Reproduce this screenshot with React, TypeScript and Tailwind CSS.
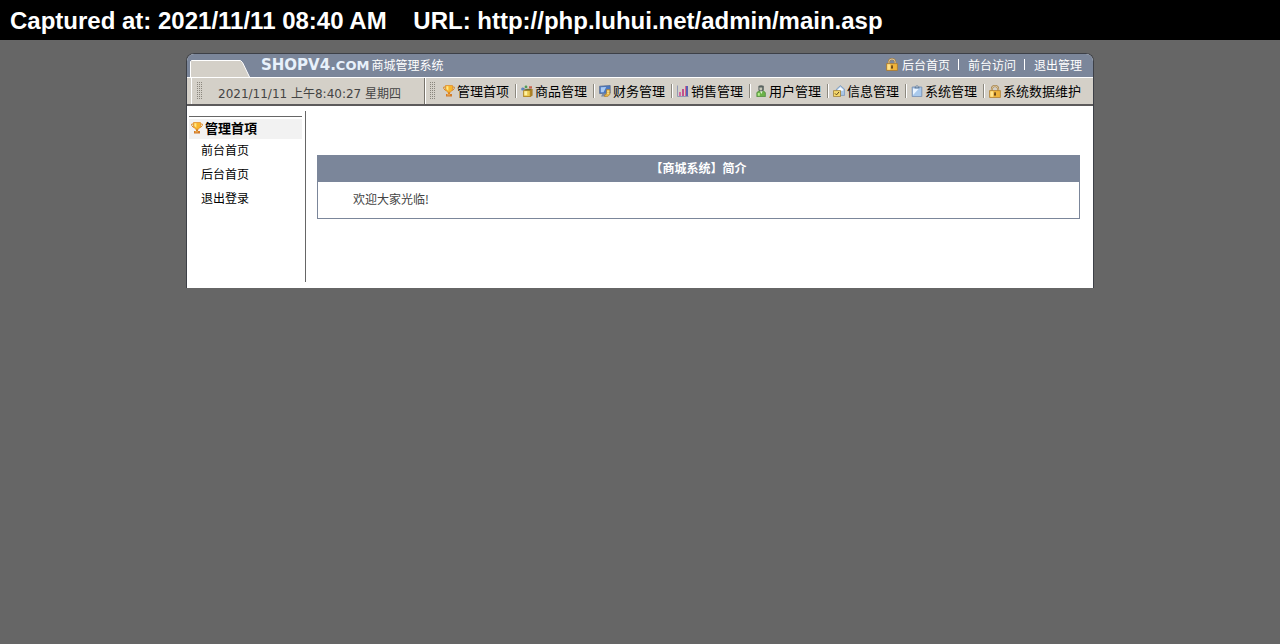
import type { ReactNode } from 'react';

const TrophyIcon = () => (
    <svg width="12" height="12" viewBox="0 0 12 12" className="shrink-0">
        <path d="M2.5 2H.7v1.4L2 5.2h1.4M9.5 2h1.8v1.4L10 5.2H8.6" fill="none" stroke="#d98a2b" />
        <path d="M2.5.5h7v3.9L7.4 7.3H4.6L2.5 4.4z" fill="#f9b62c" stroke="#e08a24" strokeWidth=".7" />
        <path d="M3.4 1.2h2v4.6L3.4 4z" fill="#ffe88a" />
        <path d="M5 7.2h2v2H5z" fill="#d98324" />
        <path d="M3 9h6v2.6H3z" fill="#d27b2a" />
        <path d="M4 9.4h3v.9H4z" fill="#fbc96a" />
    </svg>
);

const GoodsIcon = () => (
    <svg width="12" height="12" viewBox="0 0 12 12" className="shrink-0">
        <path d="M2.4 5.2L4.6 4h7v6.4L9.4 12h-7z" fill="#a9802a" />
        <path d="M2.6 5.4h6.6v6.2H2.6z" fill="#e9c84f" stroke="#a8781c" strokeWidth=".6" />
        <path d="M3.4 6.2h2.8v4H3.4z" fill="#fdf0a0" />
        <path d="M4 5.2L6 3.8h4.6L9 5.2z" fill="#6b6f32" />
        <circle cx="1.6" cy="4" r="1.5" fill="#5c86c4" />
        <circle cx="5" cy="1.9" r="1.4" fill="#4f9c58" />
        <path d="M8 3.6V1.2h3v2.4z" fill="#c8604c" />
        <path d="M2.4 2.8l2.2 2.4" stroke="#4a5f8a" strokeWidth=".8" />
    </svg>
);

const FinanceIcon = () => (
    <svg width="12" height="12" viewBox="0 0 12 12" className="shrink-0">
        <path d="M.6 1.2L11.2.5v7.7L.6 8.6z" fill="#4c78c0" stroke="#52658b" strokeWidth=".7" />
        <path d="M1.8 2.2l5.4-.3-2.6 5.4H1.8z" fill="#a8c9f3" />
        <path d="M3.4 8.8h3.4v2.8H2z" fill="#7d8ca5" />
        <path d="M7.6 4.6h3.2v5L8.4 11.6H5.6V10l2-1z" fill="#e9b543" stroke="#a87522" strokeWidth=".6" />
        <path d="M8 6.2h2.4M7.8 8.2h2.4" stroke="#fff0a6" strokeWidth=".9" />
    </svg>
);

const ChartIcon = () => (
    <svg width="12" height="12" viewBox="0 0 12 12" className="shrink-0">
        <path d="M.5.5v11H11.5" fill="none" stroke="#9299b4" />
        <path d="M2 7h2v4H2z" fill="#d668a1" />
        <path d="M5 4h2v7H5z" fill="#c0508e" />
        <path d="M8 1h3v10H8z" fill="#5960b5" />
        <path d="M8 1h1v10H8z" fill="#e06487" />
    </svg>
);

const UserIcon = () => (
    <svg width="12" height="12" viewBox="0 0 12 12" className="shrink-0">
        <path d="M1.8 11.7V7.6L4 5.8h4.4l2 1.8v4.1z" fill="#6cb24a" stroke="#3f7a31" strokeWidth=".6" />
        <path d="M5 6h2.6L6.4 9z" fill="#e5f5da" />
        <path d="M3.4.9Q6 -.6 8.8.9V5L7.4 6.2H4.8L3.4 5z" fill="#596360" />
        <path d="M4.4 2.6h2.8v2L6 5.8 4.4 4.6z" fill="#c8c9b9" />
        <path d="M2.8 8h2v2.8h-2z" fill="#b4ec8c" />
    </svg>
);

const InfoIcon = () => (
    <svg width="12" height="12" viewBox="0 0 12 12" className="shrink-0">
        <path d="M3.4 4.2L7.4.6l4.2 3.6v6.2H3.4z" fill="#a9c6e6" stroke="#718fb5" strokeWidth=".7" />
        <path d="M4.8 4.4l2.6-2.4 2.8 2.4v1.4H4.8z" fill="#f5faff" />
        <path d="M.5 5.6h7v5.9h-7z" fill="#f5d76b" stroke="#97752c" strokeWidth=".7" />
        <path d="M2 8.4l1.5 1.5L6 7" fill="none" stroke="#59431a" />
    </svg>
);

const ClipboardIcon = () => (
    <svg width="12" height="12" viewBox="0 0 12 12" className="shrink-0">
        <path d="M1.2 2h9.6v9.6H1.2z" fill="#a9c9ec" stroke="#7089ae" strokeWidth=".8" />
        <path d="M2 3.6h6L2 10z" fill="#eaf4ff" />
        <path d="M3.6 1.8h1L5 .4h2l.4 1.4h1v1.8H3.6z" fill="#66809f" />
        <path d="M5 1.4h2v.9H5z" fill="#d6dde5" />
    </svg>
);

const LockIcon = () => (
    <svg width="12" height="13" viewBox="0 0 12 13" className="shrink-0">
        <path d="M2.9 6V3.8a3.1 2.8 0 0 1 6.2 0V6" fill="none" stroke="#a07c44" strokeWidth="2" />
        <path d="M2.9 6V3.8a3.1 2.8 0 0 1 6.2 0V6" fill="none" stroke="#ead9b4" strokeWidth=".8" />
        <path d="M.6 5.6h10.8v6.9H.6z" fill="#efb33a" stroke="#a9752a" strokeWidth=".7" />
        <path d="M1.3 6.3h3v5.5h-3z" fill="#ffe28a" />
        <path d="M5.4 7.3h1.3l.3 3.2H5z" fill="#5c3c16" />
    </svg>
);

const menus: { title: string; icon: ReactNode }[] = [
    { title: '管理首项', icon: <TrophyIcon /> },
    { title: '商品管理', icon: <GoodsIcon /> },
    { title: '财务管理', icon: <FinanceIcon /> },
    { title: '销售管理', icon: <ChartIcon /> },
    { title: '用户管理', icon: <UserIcon /> },
    { title: '信息管理', icon: <InfoIcon /> },
    { title: '系统管理', icon: <ClipboardIcon /> },
    { title: '系统数据维护', icon: <LockIcon /> },
];

const topLinks = ['后台首页', '前台访问', '退出管理'];
const sideLinks = ['前台首页', '后台首页', '退出登录'];

// dotted handle at the start of each toolbar
const Grip = () => (
    <svg width="5" height="18" viewBox="0 0 5 18" shapeRendering="crispEdges" className="shrink-0">
        {[0, 2, 4, 6, 8, 10, 12, 14, 16].map((y) => (
            <g key={y} fill="#8a867d">
                <rect x="0" y={y} width="1" height="1" />
                <rect x="2" y={y} width="1" height="1" />
                <rect x="4" y={y} width="1" height="1" />
            </g>
        ))}
    </svg>
);

function Header() {
    return (
        <header className="bg-[#7b869a]">
            <div className="flex h-6 items-center border-b border-white pr-[11px] pl-[2px] text-xs text-white">
                <svg width="62" height="18" viewBox="0 0 62 18" className="shrink-0 self-end">
                    <path d="M1.5 18V2.5l1-1h49l2 2 7 14.5z" fill="#d4d0c8" />
                    <path d="M1.5 18V2.5l1-1h49l2 2 7 14.5" fill="none" stroke="#fff" />
                </svg>
                <h1 className="ml-[10px] flex items-baseline gap-[2px] whitespace-nowrap">
                    <span className="font-['DejaVu_Sans'] text-[15px] leading-5 font-bold text-[#e8f1fb]">
                        SHOPV4.<span className="text-[13px]">COM</span>
                    </span>
                    商城管理系统
                </h1>
                <div className="ml-auto flex items-center pb-[2px] whitespace-nowrap">
                    <LockIcon />
                    {topLinks.map((link, i) => (
                        <span key={link} className="flex items-center">
                            {i > 0 && (
                                <span className="flex w-[18px] justify-center">
                                    <span className="h-[11px] w-px bg-white" />
                                </span>
                            )}
                            <a href="#" className={i === 0 ? 'ml-1' : ''}>
                                {link}
                            </a>
                        </span>
                    ))}
                </div>
            </div>
            <div className="flex h-7 border-b-2 border-[#5c5a5b] bg-[#d4d0c8]">
                <div className="ml-1 flex w-[234px] items-center border-r border-l border-r-[#77736b] border-l-white pl-[5px]">
                    <Grip />
                    <time className="ml-4 pt-[6px] font-['DejaVu_Sans','Noto_Sans_CJK_SC',sans-serif] text-xs whitespace-nowrap text-[#444]">
                        2021/11/11 上午8:40:27 星期四
                    </time>
                </div>
                <nav className="flex flex-1 items-center border-l border-white pl-1">
                    <Grip />
                    <ul className="ml-2 flex items-center text-[13px] leading-5 whitespace-nowrap text-black">
                        {menus.map((menu, i) => (
                            <li key={menu.title} className="flex items-center">
                                {i > 0 && (
                                    <span className="mr-1 ml-[6px] h-[14px] w-[2px] border-r border-l border-l-[#8d897f] border-r-white" />
                                )}
                                <a href="#" className="flex items-center gap-[2px]">
                                    {menu.icon}
                                    {menu.title}
                                </a>
                            </li>
                        ))}
                    </ul>
                </nav>
            </div>
        </header>
    );
}

function Sidebar() {
    return (
        <aside className="w-[119px] shrink-0 border-r border-[#666] pt-[5px] pr-[3px] pl-[2px] text-xs text-black">
            <div className="border-t border-[#666] pt-[2px]">
                <h2 className="flex h-5 items-center gap-[2px] bg-[#f2f2f2] pb-[2px] pl-[2px] text-[13px] font-bold">
                    <TrophyIcon />
                    管理首項
                </h2>
            </div>
            <ul className="-mt-px pl-3 leading-6">
                {sideLinks.map((link) => (
                    <li key={link}>
                        <a href="#">{link}</a>
                    </li>
                ))}
            </ul>
        </aside>
    );
}

function App() {
    return (
        <div className="min-h-screen bg-[#666] font-['Noto_Sans_CJK_SC',sans-serif]">
            <div className="h-10 bg-black px-[10px] font-['Liberation_Sans'] text-2xl leading-[42px] font-bold whitespace-pre text-white">
                Captured at: 2021/11/11 08:40 AM{'    '}URL: http://php.luhui.net/admin/main.asp
            </div>
            <div className="mx-auto mt-[13px] max-w-[908px] overflow-hidden rounded-t-lg border-x border-t border-[#3d4047] bg-white">
                <Header />
                <div className="flex min-h-[182px] pt-[5px] pb-[6px]">
                    <Sidebar />
                    <main className="flex-1 pt-11 pr-[13px] pl-[11px] text-xs">
                        <section className="border border-[#7b869a]">
                            <h2 className="bg-[#7b869a] pb-[2px] text-center leading-6 font-bold text-white">
                                【商城系统】简介
                            </h2>
                            <p className="pb-[2px] pl-[35px] leading-[34px] text-[#444]">欢迎大家光临!</p>
                        </section>
                    </main>
                </div>
            </div>
        </div>
    );
}

export default App;
